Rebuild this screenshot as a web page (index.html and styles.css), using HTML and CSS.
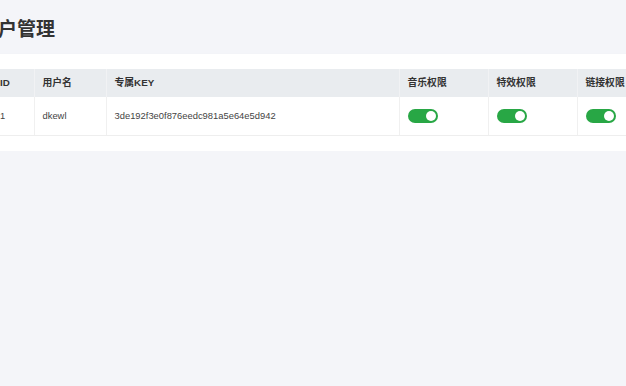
FILE: index.html
```html
<!DOCTYPE html>
<html lang="zh-CN">
<head>
  <meta charset="UTF-8">
  <meta name="viewport" content="width=device-width, initial-scale=1.0">
  <title>用户管理</title>
  <link rel="stylesheet" href="styles.css">
</head>
<body>
  <div class="page">
    <h1>用户管理</h1>
    <div class="card">
      <table class="user-table">
        <colgroup>
          <col class="col-id">
          <col class="col-name">
          <col class="col-key">
          <col class="col-perm">
          <col class="col-perm">
          <col class="col-last">
        </colgroup>
        <thead>
          <tr>
            <th>ID</th>
            <th>用户名</th>
            <th>专属KEY</th>
            <th>音乐权限</th>
            <th>特效权限</th>
            <th>链接权限</th>
          </tr>
        </thead>
        <tbody>
          <tr>
            <td>1</td>
            <td>dkewl</td>
            <td>3de192f3e0f876eedc981a5e64e5d942</td>
            <td><span class="switch on"></span></td>
            <td><span class="switch on"></span></td>
            <td><span class="switch on"></span></td>
          </tr>
        </tbody>
      </table>
    </div>
  </div>
</body>
</html>
```

FILE: styles.css
```css
body {
  font-family: 'Liberation Sans', 'Noto Sans CJK SC', sans-serif;
  background-color: #f4f5f9;
  color: #333;
  margin: 0;
  display: flex;
  justify-content: center;
  overflow: hidden;
}
.page {
  width: 668px;
  flex-shrink: 0;
  padding-top: 14px;
}
h1 {
  font-family: 'Noto Sans CJK SC', sans-serif;
  font-size: 19px;
  line-height: 28px;
  font-weight: 700;
  margin: 0 0 12px;
  color: #333;
}
.card {
  background-color: white;
  padding: 15px 13px 15px;
  box-shadow: 0 2px 4px rgba(0, 0, 0, 0.06);
}
.user-table {
  width: 100%;
  border-collapse: collapse;
  table-layout: fixed;
  font-size: 9.8px;
}
.col-id { width: 42px; }
.col-name { width: 72px; }
.col-key { width: 293px; }
.col-perm { width: 89px; }
.user-table th {
  background-color: #e9ecef;
  text-align: left;
  font-weight: 700;
  padding: 7px 8px;
  line-height: 14px;
  border-right: 1px solid #f1f2f4;
  color: #333;
}
.user-table td {
  padding: 12px 8px;
  line-height: 14px;
  font-size: 9.4px;
  border-right: 1px solid #f0f0f0;
  border-bottom: 1px solid #eeeeee;
  color: #444;
  white-space: nowrap;
}
.switch {
  display: block;
  width: 30px;
  height: 14px;
  border-radius: 7px;
  background-color: #28a745;
  position: relative;
}
.switch::after {
  content: '';
  position: absolute;
  top: 2px;
  right: 2px;
  width: 10px;
  height: 10px;
  border-radius: 50%;
  background-color: white;
}
```
